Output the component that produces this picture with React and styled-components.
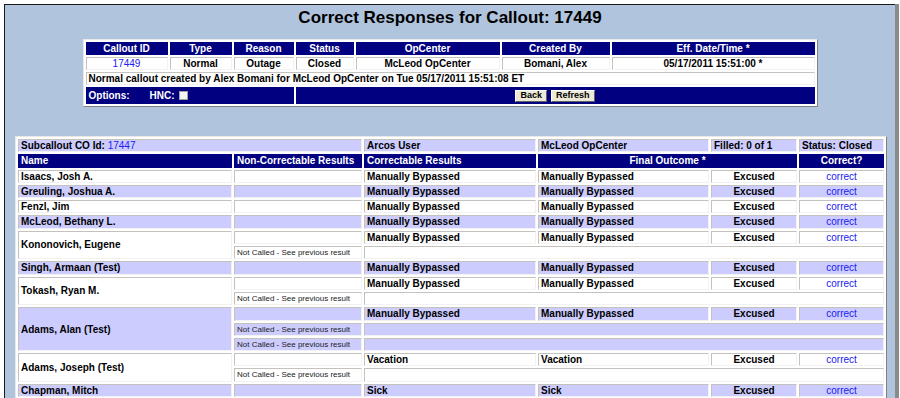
import React from 'react'
import styled, { createGlobalStyle } from 'styled-components'

const GlobalStyle = createGlobalStyle`
  * { box-sizing: border-box; }
  html, body {
    margin: 0;
    padding: 0;
    background: #ffffff;
    font-family: "Liberation Sans", Arial, sans-serif;
  }
`

const NAVY = '#000080'
const LAVENDER = '#ccccff'
const LINK = '#2020f0'

const callout = {
  id: '17449',
  type: 'Normal',
  reason: 'Outage',
  status: 'Closed',
  opCenter: 'McLeod OpCenter',
  createdBy: 'Bomani, Alex',
  effDate: '05/17/2011 15:51:00 *',
  note: 'Normal callout created by Alex Bomani for McLeod OpCenter on Tue 05/17/2011 15:51:08 ET',
}

const NOT_CALLED = 'Not Called - See previous result'
const bypass = { cr: 'Manually Bypassed', fo: 'Manually Bypassed', outcome: 'Excused' }

const people = [
  { name: 'Isaacs, Josh A.', rows: [bypass] },
  { name: 'Greuling, Joshua A.', rows: [bypass] },
  { name: 'Fenzl, Jim', rows: [bypass] },
  { name: 'McLeod, Bethany L.', rows: [bypass] },
  { name: 'Kononovich, Eugene', rows: [bypass, { nc: NOT_CALLED }] },
  { name: 'Singh, Armaan (Test)', rows: [bypass] },
  { name: 'Tokash, Ryan M.', rows: [bypass, { nc: NOT_CALLED }] },
  { name: 'Adams, Alan (Test)', rows: [bypass, { nc: NOT_CALLED }, { nc: NOT_CALLED }] },
  {
    name: 'Adams, Joseph (Test)',
    rows: [{ cr: 'Vacation', fo: 'Vacation', outcome: 'Excused' }, { nc: NOT_CALLED }],
  },
  { name: 'Chapman, Mitch', rows: [{ cr: 'Sick', fo: 'Sick', outcome: 'Excused' }] },
]

const App = () => {
  return (
    <>
      <GlobalStyle />
      <Frame>
        <Title>Correct Responses for Callout: 17449</Title>

        <SummaryTable>
          <colgroup>
            <col style={{ width: 82 }} />
            <col style={{ width: 62 }} />
            <col style={{ width: 60 }} />
            <col style={{ width: 58 }} />
            <col style={{ width: 144 }} />
            <col style={{ width: 108 }} />
            <col style={{ width: 203 }} />
          </colgroup>
          <tbody>
            <tr>
              <Th>Callout ID</Th>
              <Th>Type</Th>
              <Th>Reason</Th>
              <Th>Status</Th>
              <Th>OpCenter</Th>
              <Th>Created By</Th>
              <Th>Eff. Date/Time *</Th>
            </tr>
            <tr>
              <Td $center><Link>{callout.id}</Link></Td>
              <Td $center>{callout.type}</Td>
              <Td $center>{callout.reason}</Td>
              <Td $center>{callout.status}</Td>
              <Td $center>{callout.opCenter}</Td>
              <Td $center>{callout.createdBy}</Td>
              <Td $center>{callout.effDate}</Td>
            </tr>
            <tr>
              <Td colSpan={7}>{callout.note}</Td>
            </tr>
            <tr>
              <OptionsCell colSpan={3}>
                <span>Options:</span>
                <span className="hnc">HNC:</span>
                <CheckBox />
              </OptionsCell>
              <OptionsCell colSpan={4} $center>
                <Button>Back</Button>
                <Button>Refresh</Button>
              </OptionsCell>
            </tr>
          </tbody>
        </SummaryTable>

        <ResultsTable>
          <colgroup>
            <col style={{ width: 214 }} />
            <col style={{ width: 128 }} />
            <col style={{ width: 172 }} />
            <col style={{ width: 171 }} />
            <col style={{ width: 86 }} />
            <col style={{ width: 85 }} />
          </colgroup>
          <tbody>
            <tr>
              <Td $bg={LAVENDER} colSpan={2}>
                Subcallout CO Id: <Link>17447</Link>
              </Td>
              <Td $bg={LAVENDER}>Arcos User</Td>
              <Td $bg={LAVENDER}>McLeod OpCenter</Td>
              <Td $bg={LAVENDER}>Filled: 0 of 1</Td>
              <Td $bg={LAVENDER}>Status: Closed</Td>
            </tr>
            <tr>
              <Th $left>Name</Th>
              <Th $left>Non-Correctable Results</Th>
              <Th $left>Correctable Results</Th>
              <Th colSpan={2}>Final Outcome *</Th>
              <Th>Correct?</Th>
            </tr>
            {people.map((person, i) => {
              const bg = i % 2 === 1 ? LAVENDER : '#ffffff'
              return person.rows.map((row, j) => (
                <tr key={person.name + j}>
                  {j === 0 && (
                    <Td $bg={bg} rowSpan={person.rows.length}>
                      {person.name}
                    </Td>
                  )}
                  <Td $bg={bg} $small>{row.nc || ''}</Td>
                  {row.cr ? (
                    <>
                      <Td $bg={bg}>{row.cr}</Td>
                      <Td $bg={bg}>{row.fo}</Td>
                      <Td $bg={bg} $center>{row.outcome}</Td>
                      <Td $bg={bg} $center><Link>correct</Link></Td>
                    </>
                  ) : (
                    <Td $bg={bg} colSpan={4} />
                  )}
                </tr>
              ))
            })}
          </tbody>
        </ResultsTable>
      </Frame>
    </>
  )
}

export default App

const Frame = styled.div`
  margin: 4px 5px 0 4px;
  height: 394px;
  background: #b0c4de;
  border-left: 1px solid #1a1a1a;
  border-top: 1px solid #1a1a1a;
  box-shadow: 4px 0 0 #8a8a8a;
  overflow: hidden;
`

const Title = styled.h1`
  margin: 3px 0 0;
  text-align: center;
  font-size: 17px;
  line-height: 20px;
  font-weight: bold;
  color: #000;
`

const BaseTable = styled.table`
  table-layout: fixed;
  border-collapse: separate;
  border-spacing: 2px;
  background: #ffffff;
  border: 1px solid;
  border-color: #e8e8e8 #808080 #808080 #e8e8e8;
  font-size: 10px;
  font-weight: bold;
  color: #000;
`

const SummaryTable = styled(BaseTable)`
  width: 735px;
  margin: 11px auto 0;

  td, th {
    line-height: 11px;
  }
`

const ResultsTable = styled(BaseTable)`
  width: 872px;
  margin: 29px 0 0 10px;

  td, th {
    line-height: 11.3px;
  }
`

const Th = styled.th`
  background: ${NAVY};
  color: #ffffff;
  border: 1px solid ${NAVY};
  padding: 0 2px;
  text-align: ${p => (p.$left ? 'left' : 'center')};
  white-space: nowrap;
  overflow: hidden;
`

const Td = styled.td`
  background: ${p => p.$bg || '#ffffff'};
  border: 1px solid;
  border-color: #c4c2bc #f2f2f2 #f2f2f2 #c4c2bc;
  padding: 0 2px;
  text-align: ${p => (p.$center ? 'center' : 'left')};
  vertical-align: middle;
  white-space: nowrap;
  overflow: hidden;
  ${p => p.$small && `
    font-size: 8px;
    font-weight: normal;
    color: #222;
  `}
`

const OptionsCell = styled.td`
  background: ${NAVY};
  color: #ffffff;
  border: 1px solid ${NAVY};
  height: 17px;
  padding: 0 2px;
  text-align: ${p => (p.$center ? 'center' : 'left')};
  vertical-align: middle;
  white-space: nowrap;

  .hnc {
    margin-left: 20px;
  }
`

const CheckBox = styled.span`
  display: inline-block;
  width: 9px;
  height: 9px;
  margin-left: 4px;
  vertical-align: -1px;
  background: #f4f4f4;
  border: 1px solid #a0a0a0;
`

const Button = styled.button`
  height: 12px;
  margin: 0 2px;
  padding: 0 4px;
  font-family: "Liberation Sans", Arial, sans-serif;
  font-size: 9px;
  font-weight: bold;
  line-height: 9px;
  color: #000;
  background: #ece9d8;
  border: 1px solid;
  border-color: #ffffff #606060 #606060 #ffffff;
  vertical-align: middle;
`

const Link = styled.span`
  color: ${LINK};
  font-weight: normal;
`
